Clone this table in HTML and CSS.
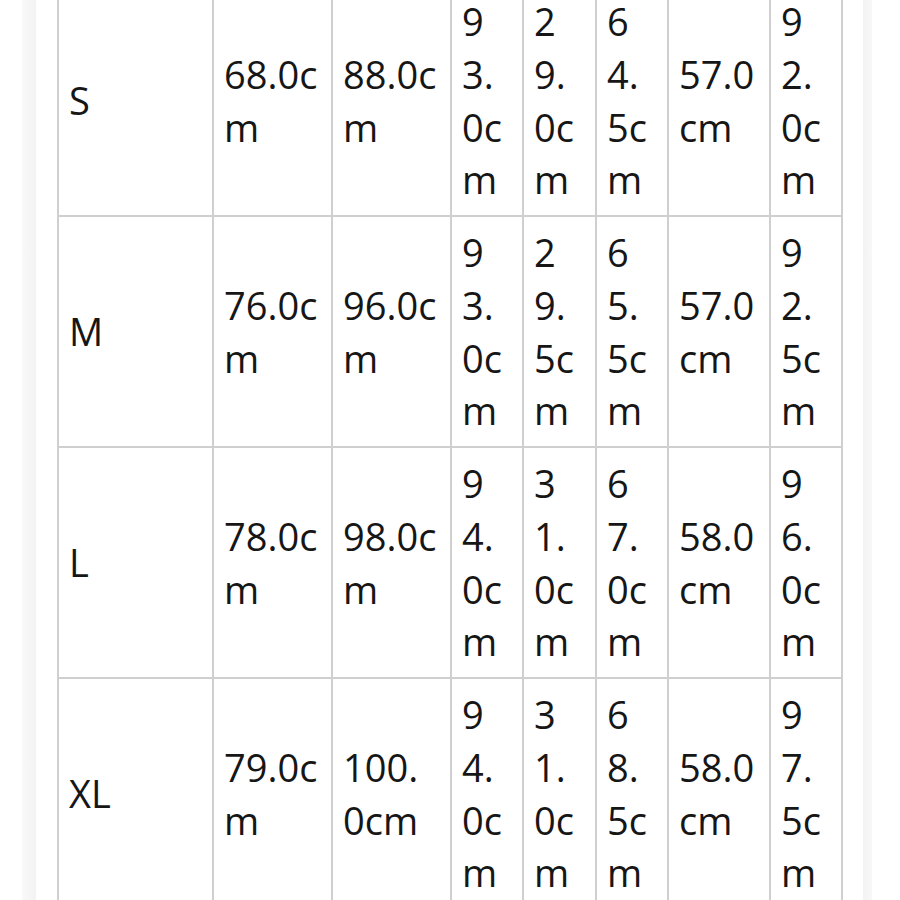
FILE: index.html
```html
<!DOCTYPE html>
<html>
<head>
<meta charset="utf-8">
<link rel="stylesheet" href="styles.css">
</head>
<body>
<div class="page">
  <div class="gap-left"></div>
  <div class="strip"></div>
  <div class="content">
    <table class="size-table">
      <colgroup>
        <col class="c-size">
        <col class="c-wide">
        <col class="c-wide">
        <col class="c-narrow">
        <col class="c-narrow2">
        <col class="c-narrow">
        <col class="c-mid">
        <col class="c-narrow">
      </colgroup>
      <tbody>
        <tr><td>S</td><td>68.0cm</td><td>88.0cm</td><td>93.0cm</td><td>29.0cm</td><td>64.5cm</td><td>57.0cm</td><td>92.0cm</td></tr>
        <tr><td>M</td><td>76.0cm</td><td>96.0cm</td><td>93.0cm</td><td>29.5cm</td><td>65.5cm</td><td>57.0cm</td><td>92.5cm</td></tr>
        <tr><td>L</td><td>78.0cm</td><td>98.0cm</td><td>94.0cm</td><td>31.0cm</td><td>67.0cm</td><td>58.0cm</td><td>96.0cm</td></tr>
        <tr><td>XL</td><td>79.0cm</td><td>100.0cm</td><td>94.0cm</td><td>31.0cm</td><td>68.5cm</td><td>58.0cm</td><td>97.5cm</td></tr>
      </tbody>
    </table>
  </div>
  <div class="strip strip-right"></div>
</div>
</body>
</html>
```

FILE: styles.css
```css
html, body {
  margin: 0;
  padding: 0;
  background: #ffffff;
  height: 900px;
  overflow: hidden;
}

.page {
  display: flex;
  height: 900px;
}

.gap-left {
  width: 22px;
  flex: none;
}

.strip {
  width: 14px;
  flex: none;
  background: linear-gradient(to right, #f9f9f9, #f3f3f3);
}

.strip-right {
  width: 9px;
  background: linear-gradient(to right, #f3f3f3, #f8f8f8);
}

.content {
  width: 827px;
  flex: none;
  padding-left: 21px;
  box-sizing: border-box;
}

.size-table {
  margin-top: -16px;
  border-collapse: collapse;
  table-layout: fixed;
  width: 786px;
  font-family: "Open Sans", "Noto Sans", sans-serif;
  font-size: 38px;
  font-weight: 400;
  line-height: 52.7px;
  color: #161616;
}

.c-size { width: 155px; }
.c-wide { width: 119px; }
.c-narrow { width: 72px; }
.c-narrow2 { width: 73px; }
.c-mid { width: 102px; }

.size-table td {
  border: 2px solid #cfcfcf;
  padding: 9px 12px 9px 10px;
  vertical-align: middle;
  word-break: break-all;
  height: 211px;
}
```
